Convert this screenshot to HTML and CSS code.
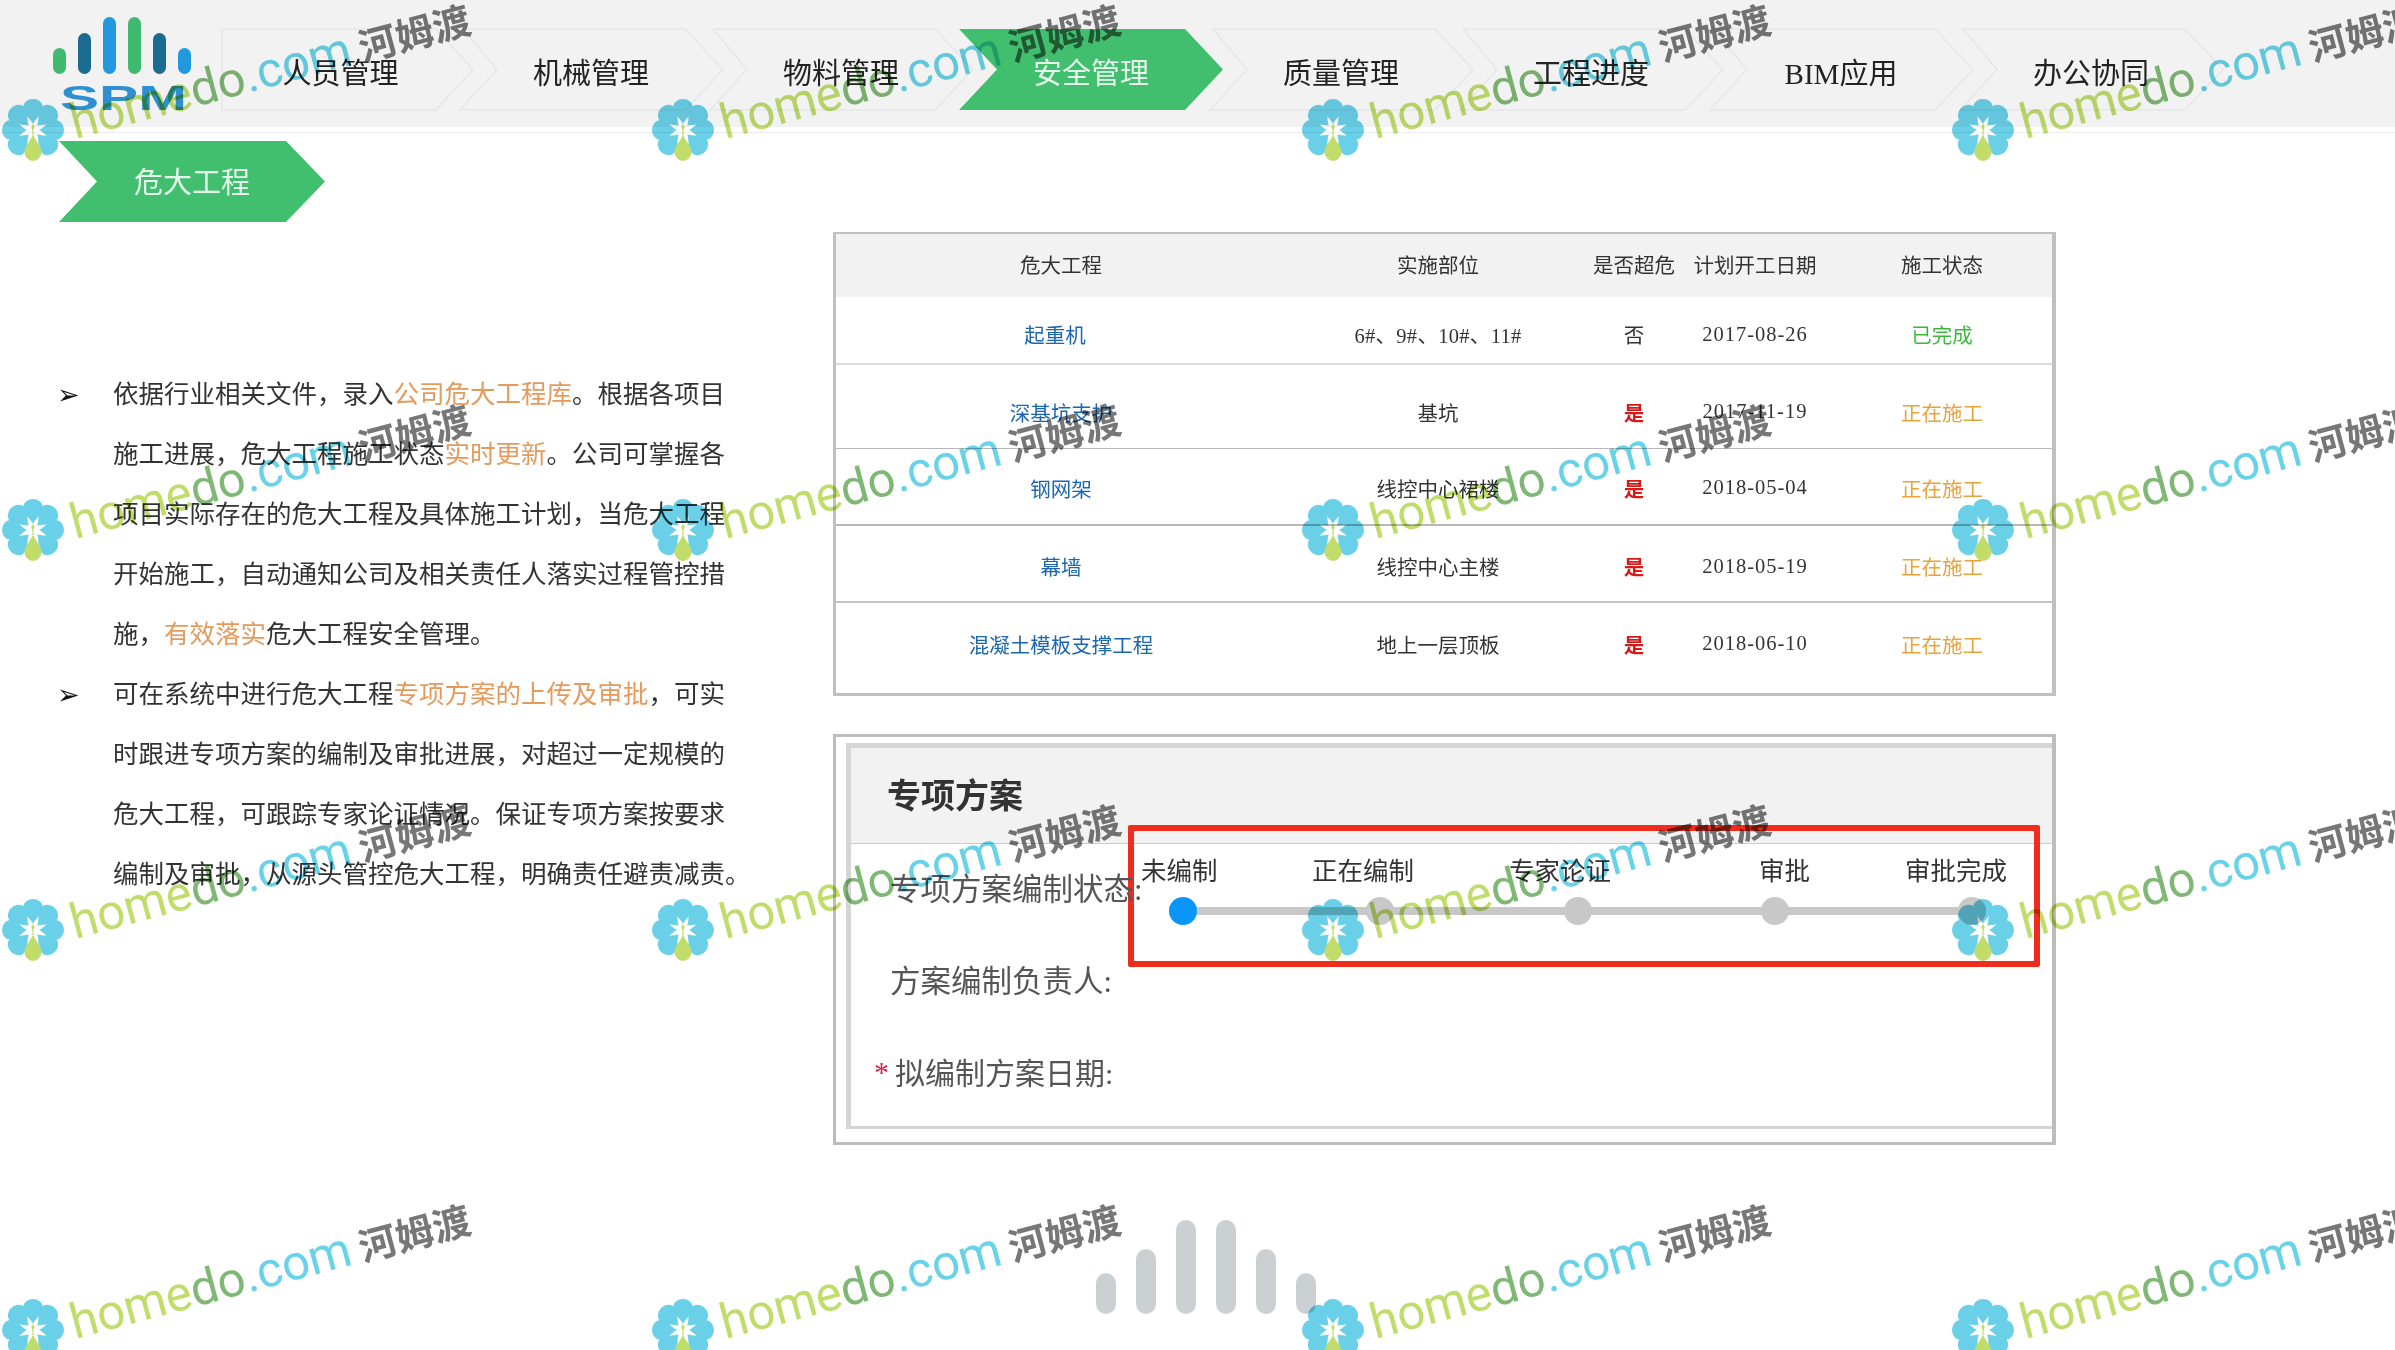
FILE: index.html
```html
<!DOCTYPE html>
<html lang="zh-CN">
<head>
<meta charset="utf-8">
<title>危大工程</title>
<link rel="stylesheet" href="styles.css">
</head>
<body>
<svg class="defs" width="0" height="0" aria-hidden="true">
  <defs>
    <path id="petal" d="M0,-6 C-2,-11 -10,-16 -10,-22.5 A10,8.5 0 0 1 10,-22.5 C10,-16 2,-11 0,-6Z"/>
    <symbol id="flower" viewBox="-32 -32 64 64">
      <g class="petal-blue">
        <use href="#petal"/>
        <use href="#petal" transform="rotate(45)"/>
        <use href="#petal" transform="rotate(90)"/>
        <use href="#petal" transform="rotate(135)"/>
        <use href="#petal" transform="rotate(225)"/>
        <use href="#petal" transform="rotate(270)"/>
        <use href="#petal" transform="rotate(315)"/>
      </g>
      <path class="petal-green" d="M0,4 C-1,10 -8.5,15 -8.5,22 A8.5,9 0 0 0 8.5,22 C8.5,15 1,10 0,4Z"/>
      <path class="petal-green" d="M0,-6 L1.8,-3 L0.6,0 L0.6,5 L-0.6,5 L-0.6,0 L-1.8,-3Z"/>
    </symbol>
  </defs>
</svg>

<header class="header">
  <div class="topbar">
    <svg class="logo" viewBox="0 0 222 127" width="222" height="127">
      <rect class="lg" x="53" y="48" width="13" height="26" rx="6.5"/>
      <rect class="ld" x="78" y="33" width="13" height="41" rx="6.5"/>
      <rect class="lb" x="103" y="17" width="13" height="57" rx="6.5"/>
      <rect class="lg" x="128" y="17" width="13" height="57" rx="6.5"/>
      <rect class="ld" x="153" y="33" width="13" height="41" rx="6.5"/>
      <rect class="lb" x="178" y="48" width="13" height="26" rx="6.5"/>
      <text class="logo-text" x="60" y="110" textLength="127" lengthAdjust="spacingAndGlyphs">SPM</text>
    </svg>
    <nav class="nav">
      <a class="nav-item nav-first">
        <svg class="chev" viewBox="0 0 251 81" width="251" height="81"><polygon points="0,0 214,0 251,40.5 214,81 0,81"/></svg>
        <span class="nav-label">人员管理</span>
      </a>
      <a class="nav-item">
        <svg class="chev" viewBox="0 0 264 81" width="264" height="81"><polygon points="4,0 226,0 264,40.5 226,81 1,81 38,40.5"/></svg>
        <span class="nav-label">机械管理</span>
      </a>
      <a class="nav-item">
        <svg class="chev" viewBox="0 0 264 81" width="264" height="81"><polygon points="4,0 226,0 264,40.5 226,81 1,81 38,40.5"/></svg>
        <span class="nav-label">物料管理</span>
      </a>
      <a class="nav-item nav-active">
        <svg class="chev" viewBox="0 0 264 81" width="264" height="81"><polygon points="0,0 226,0 264,40.5 226,81 0,81 38,40.5"/></svg>
        <span class="nav-label">安全管理</span>
      </a>
      <a class="nav-item">
        <svg class="chev" viewBox="0 0 264 81" width="264" height="81"><polygon points="4,0 226,0 264,40.5 226,81 1,81 38,40.5"/></svg>
        <span class="nav-label">质量管理</span>
      </a>
      <a class="nav-item">
        <svg class="chev" viewBox="0 0 264 81" width="264" height="81"><polygon points="4,0 226,0 264,40.5 226,81 1,81 38,40.5"/></svg>
        <span class="nav-label">工程进度</span>
      </a>
      <a class="nav-item">
        <svg class="chev" viewBox="0 0 264 81" width="264" height="81"><polygon points="4,0 226,0 264,40.5 226,81 1,81 38,40.5"/></svg>
        <span class="nav-label">BIM应用</span>
      </a>
      <a class="nav-item">
        <svg class="chev" viewBox="0 0 264 81" width="264" height="81"><polygon points="4,0 226,0 264,40.5 226,81 1,81 38,40.5"/></svg>
        <span class="nav-label">办公协同</span>
      </a>
    </nav>
  </div>
</header>

<main class="main">
  <section class="left">
    <div class="tab"><span class="tab-label">危大工程</span></div>
    <ul class="points">
      <li class="point">
        <span class="bullet">➢</span>
        <p class="point-text">依据行业相关文件，录入<em class="hl">公司危大工程库</em>。根据各项目<br>施工进展，危大工程施工状态<em class="hl">实时更新</em>。公司可掌握各<br>项目实际存在的危大工程及具体施工计划，当危大工程<br>开始施工，自动通知公司及相关责任人落实过程管控措<br>施，<em class="hl">有效落实</em>危大工程安全管理。</p>
      </li>
      <li class="point">
        <span class="bullet">➢</span>
        <p class="point-text">可在系统中进行危大工程<em class="hl">专项方案的上传及审批</em>，可实<br>时跟进专项方案的编制及审批进展，对超过一定规模的<br>危大工程，可跟踪专家论证情况。保证专项方案按要求<br>编制及审批，从源头管控危大工程，明确责任避责减责。</p>
      </li>
    </ul>
  </section>

  <section class="right">
    <div class="table-card">
      <div class="trow thead">
        <span>危大工程</span><span>实施部位</span><span>是否超危</span><span>计划开工日期</span><span>施工状态</span>
      </div>
      <div class="trow r1">
        <span class="link link-shift">起重机</span><span class="num-soft">6#、9#、10#、11#</span><span>否</span><span class="num">2017-08-26</span><span class="done">已完成</span>
      </div>
      <div class="trow r2">
        <span class="link">深基坑支护</span><span>基坑</span><span class="yes">是</span><span class="num">2017-11-19</span><span class="doing">正在施工</span>
      </div>
      <div class="trow r3">
        <span class="link">钢网架</span><span>线控中心裙楼</span><span class="yes">是</span><span class="num">2018-05-04</span><span class="doing">正在施工</span>
      </div>
      <div class="trow r4">
        <span class="link">幕墙</span><span>线控中心主楼</span><span class="yes">是</span><span class="num">2018-05-19</span><span class="doing">正在施工</span>
      </div>
      <div class="trow r5">
        <span class="link">混凝土模板支撑工程</span><span>地上一层顶板</span><span class="yes">是</span><span class="num">2018-06-10</span><span class="doing">正在施工</span>
      </div>
    </div>

    <div class="plan-card">
      <div class="panel">
        <h2 class="panel-title">专项方案</h2>
        <div class="highlight-box"></div>
        <div class="panel-body">
          <div class="form-row">
            <span class="form-label label-status">专项方案编制状态:</span>
            <div class="steps">
              <div class="step-labels">
                <span>未编制</span><span>正在编制</span><span>专家论证</span><span>审批</span><span>审批完成</span>
              </div>
              <div class="step-track">
                <i class="dot dot-on"></i><i class="dot"></i><i class="dot"></i><i class="dot"></i><i class="dot"></i>
              </div>
            </div>
          </div>
          <div class="form-row">
            <span class="form-label">方案编制负责人:</span>
          </div>
          <div class="form-row">
            <span class="star">*</span><span class="form-label label-date">拟编制方案日期:</span>
          </div>
        </div>
      </div>
    </div>
  </section>
</main>

<div class="pulse">
  <i class="bar bar-s"></i><i class="bar bar-m"></i><i class="bar bar-l"></i><i class="bar bar-l"></i><i class="bar bar-m"></i><i class="bar bar-s"></i>
</div>

<div class="watermarks" aria-hidden="true">
  <div class="wm-grid">
  <div class="wm"><svg class="wm-flower" width="64" height="64"><use href="#flower"/></svg><div class="wm-text"><span class="w1">home</span><span class="w2">do</span><span class="w3">.com</span><span class="w4">河姆渡</span></div></div>
  <div class="wm"><svg class="wm-flower" width="64" height="64"><use href="#flower"/></svg><div class="wm-text"><span class="w1">home</span><span class="w2">do</span><span class="w3">.com</span><span class="w4">河姆渡</span></div></div>
  <div class="wm"><svg class="wm-flower" width="64" height="64"><use href="#flower"/></svg><div class="wm-text"><span class="w1">home</span><span class="w2">do</span><span class="w3">.com</span><span class="w4">河姆渡</span></div></div>
  <div class="wm"><svg class="wm-flower" width="64" height="64"><use href="#flower"/></svg><div class="wm-text"><span class="w1">home</span><span class="w2">do</span><span class="w3">.com</span><span class="w4">河姆渡</span></div></div>
  <div class="wm"><svg class="wm-flower" width="64" height="64"><use href="#flower"/></svg><div class="wm-text"><span class="w1">home</span><span class="w2">do</span><span class="w3">.com</span><span class="w4">河姆渡</span></div></div>
  <div class="wm"><svg class="wm-flower" width="64" height="64"><use href="#flower"/></svg><div class="wm-text"><span class="w1">home</span><span class="w2">do</span><span class="w3">.com</span><span class="w4">河姆渡</span></div></div>
  <div class="wm"><svg class="wm-flower" width="64" height="64"><use href="#flower"/></svg><div class="wm-text"><span class="w1">home</span><span class="w2">do</span><span class="w3">.com</span><span class="w4">河姆渡</span></div></div>
  <div class="wm"><svg class="wm-flower" width="64" height="64"><use href="#flower"/></svg><div class="wm-text"><span class="w1">home</span><span class="w2">do</span><span class="w3">.com</span><span class="w4">河姆渡</span></div></div>
  <div class="wm"><svg class="wm-flower" width="64" height="64"><use href="#flower"/></svg><div class="wm-text"><span class="w1">home</span><span class="w2">do</span><span class="w3">.com</span><span class="w4">河姆渡</span></div></div>
  <div class="wm"><svg class="wm-flower" width="64" height="64"><use href="#flower"/></svg><div class="wm-text"><span class="w1">home</span><span class="w2">do</span><span class="w3">.com</span><span class="w4">河姆渡</span></div></div>
  <div class="wm"><svg class="wm-flower" width="64" height="64"><use href="#flower"/></svg><div class="wm-text"><span class="w1">home</span><span class="w2">do</span><span class="w3">.com</span><span class="w4">河姆渡</span></div></div>
  <div class="wm"><svg class="wm-flower" width="64" height="64"><use href="#flower"/></svg><div class="wm-text"><span class="w1">home</span><span class="w2">do</span><span class="w3">.com</span><span class="w4">河姆渡</span></div></div>
  <div class="wm"><svg class="wm-flower" width="64" height="64"><use href="#flower"/></svg><div class="wm-text"><span class="w1">home</span><span class="w2">do</span><span class="w3">.com</span><span class="w4">河姆渡</span></div></div>
  <div class="wm"><svg class="wm-flower" width="64" height="64"><use href="#flower"/></svg><div class="wm-text"><span class="w1">home</span><span class="w2">do</span><span class="w3">.com</span><span class="w4">河姆渡</span></div></div>
  <div class="wm"><svg class="wm-flower" width="64" height="64"><use href="#flower"/></svg><div class="wm-text"><span class="w1">home</span><span class="w2">do</span><span class="w3">.com</span><span class="w4">河姆渡</span></div></div>
  <div class="wm"><svg class="wm-flower" width="64" height="64"><use href="#flower"/></svg><div class="wm-text"><span class="w1">home</span><span class="w2">do</span><span class="w3">.com</span><span class="w4">河姆渡</span></div></div>
  </div>
</div>
</body>
</html>
```

FILE: styles.css
```css
* { box-sizing: border-box; }
html, body { margin: 0; padding: 0; }
body {
  position: relative;
  width: 2395px;
  height: 1350px;
  overflow: hidden;
  background: #fff;
  color: #333;
  font-family: "Liberation Serif", "Noto Sans CJK SC", sans-serif;
}
.defs { position: absolute; }
.petal-blue { fill: #69d0e8; }
.petal-green { fill: #c0dd6c; }

/* header */
.header {
  height: 133px;
  border-bottom: 1px solid #ececec;
}
.topbar {
  display: flex;
  height: 127px;
  background: #f2f2f2;
}
.logo { flex: none; display: block; }
.lg { fill: #3fba6f; }
.ld { fill: #1b6a8f; }
.lb { fill: #2299dd; }
.logo-text {
  fill: #2f8fd0;
  font-family: "Liberation Sans", sans-serif;
  font-weight: 700;
  font-size: 35px;
}
.nav {
  display: flex;
  align-items: flex-start;
  padding-top: 29px;
}
.nav-item {
  position: relative;
  flex: none;
  display: flex;
  align-items: center;
  justify-content: center;
  width: 264px;
  height: 81px;
  margin-right: -14px;
  color: #222;
  font-size: 29px;
}
.nav-first { width: 251px; margin-right: -14px; padding-right: 14px; }
.chev { position: absolute; left: 0; top: 0; overflow: visible; }
.chev polygon { fill: #f2f2f2; stroke: #e6e6e6; stroke-width: 1.5; }
.nav-label { position: relative; padding-top: 3px; }
.nav-active { color: #e6f8ec; }
.nav-active .chev polygon { fill: #41bf6e; stroke: none; }

/* layout */
.main { display: flex; align-items: flex-start; }
.left { width: 833px; flex: none; padding: 8px 0 0 59px; }
.right { width: 1223px; flex: none; padding-top: 99px; }

.tab {
  display: flex;
  align-items: center;
  justify-content: center;
  width: 266px;
  height: 81px;
  background: #41bf6e;
  color: #e6f8ec;
  font-size: 29px;
  clip-path: polygon(0 0, 227px 0, 100% 50%, 227px 100%, 0 100%, 38px 50%);
}
.tab-label { padding-bottom: 3px; }

.points { list-style: none; margin: 143px 0 0; padding: 0; }
.point { display: flex; }
.bullet {
  flex: none;
  width: 54px;
  margin-left: -2px;
  padding-right: 0;
  line-height: 60px;
  font-family: "DejaVu Sans", sans-serif;
  font-size: 27px;
  color: #111;
}
.point-text {
  margin: 0 0 0 2px;
  white-space: nowrap;
  font-size: 25.5px;
  line-height: 60px;
  color: #333;
}
.hl { font-style: normal; color: #e59a5c; }

/* table */
.table-card {
  width: 1223px;
  height: 464px;
  background: #fff;
  border-style: solid;
  border-color: #c0c0c0;
  border-width: 2px 4px 3px 3px;
}
.trow {
  display: grid;
  grid-template-columns: 450px 304px 88px 154px 220px;
  align-items: center;
  justify-items: center;
  font-size: 20.5px;
  color: #333;
  white-space: nowrap;
}
.thead { height: 63px; padding-bottom: 3px; background: #f2f2f2; }
.r1 { height: 68px; padding-top: 8px; border-bottom: 2px solid #ddd; }
.r2 { height: 84px; padding-top: 10px; border-bottom: 1px solid #b8b8b8; }
.r3 { height: 77px; padding-top: 2px; border-bottom: 2px solid #b8b8b8; }
.r4 { height: 77px; padding-top: 5px; border-bottom: 2px solid #c4c4c4; }
.r5 { height: 89px; padding-bottom: 8px; }
.link { color: #1a66b0; }
.link-shift { padding-right: 12px; }
.num { letter-spacing: 1px; }
.num-soft { letter-spacing: 0.3px; }
.yes { color: #d61a1a; font-weight: 700; }
.done { color: #3cb93c; }
.doing { color: #e8a33d; }

/* scheme */
.plan-card {
  width: 1223px;
  height: 411px;
  margin-top: 38px;
  padding: 6px 0 13px 10px;
  border-style: solid;
  border-color: #bdbdbd;
  border-width: 3px 4px 3px 3px;
}
.panel {
  position: relative;
  height: 386px;
  border-style: solid;
  border-color: #d5d5d5;
  border-width: 5px 0 3px 5px;
}
.panel-title {
  height: 96px;
  margin: 0;
  padding: 0 0 0 36px;
  background: #f2f2f2;
  border-bottom: 1px solid #ccc;
  font-size: 34px;
  line-height: 97px;
  font-weight: 700;
  color: #333;
}
.panel-body { position: relative; padding-left: 39px; }
.form-row {
  display: flex;
  align-items: flex-start;
  height: 92px;
}
.form-label {
  flex: none;
  font-size: 30.5px;
  line-height: 92px;
  color: #555;
  white-space: nowrap;
}
.label-status { width: 251px; }
.label-date { font-size: 30px; }
.star {
  flex: none;
  width: 21px;
  margin-left: -16px;
  font-size: 30px;
  line-height: 88px;
  color: #d8203a;
}
.steps { flex: none; width: 870px; padding-top: 13px; }
.step-labels {
  display: grid;
  grid-template-columns: 171px 197px 250px 146px auto;
  font-size: 25.5px;
  line-height: 30px;
  color: #333;
  white-space: nowrap;
}
.step-track {
  display: flex;
  justify-content: space-between;
  width: 817px;
  margin: 10px 0 0 28px;
  background: linear-gradient(#c8c8c8, #c8c8c8) center / 100% 8px no-repeat;
}
.dot {
  display: block;
  width: 28px;
  height: 28px;
  border-radius: 50%;
  background: #c8c8c8;
}
.dot-on { background: #0a96f8; }
.highlight-box {
  position: absolute;
  left: 277px;
  top: 77px;
  width: 912px;
  height: 142px;
  border: 6px solid #ee2d1c;
  border-radius: 2px;
}

/* loader bars */
.pulse {
  display: flex;
  align-items: flex-end;
  gap: 20px;
  height: 94px;
  margin-top: 75px;
  padding-left: 1096px;
}
.bar {
  display: block;
  flex: none;
  width: 20px;
  border-radius: 10px;
  background: #cbd1d2;
}
.bar-s { height: 41px; }
.bar-m { height: 65px; }
.bar-l { height: 94px; }

/* watermark */
.watermarks {
  position: absolute;
  left: 0;
  top: 0;
  width: 2395px;
  height: 1350px;
  overflow: hidden;
  pointer-events: none;
  mix-blend-mode: multiply;
}
.wm-grid {
  display: grid;
  grid-template-columns: repeat(4, 650px);
  grid-auto-rows: 400px;
  margin-top: -70px;
}
.wm { position: relative; }
.wm-flower { position: absolute; left: 1px; top: 168px; }
.wm-text {
  position: absolute;
  left: 75px;
  top: 168px;
  white-space: nowrap;
  font-family: "Roboto", "Noto Sans CJK SC", sans-serif;
  font-size: 49px;
  font-weight: 400;
  line-height: 50px;
  transform-origin: 0 40px;
  transform: rotate(-15deg);
}
.w1 { color: #c0dd6c; }
.w2 { color: #7fb874; }
.w3 { color: #68d2e8; }
.w4 {
  margin-left: 9px;
  color: #777;
  font-family: "Noto Sans CJK SC", sans-serif;
  font-size: 38px;
  font-weight: 700;
}
```
